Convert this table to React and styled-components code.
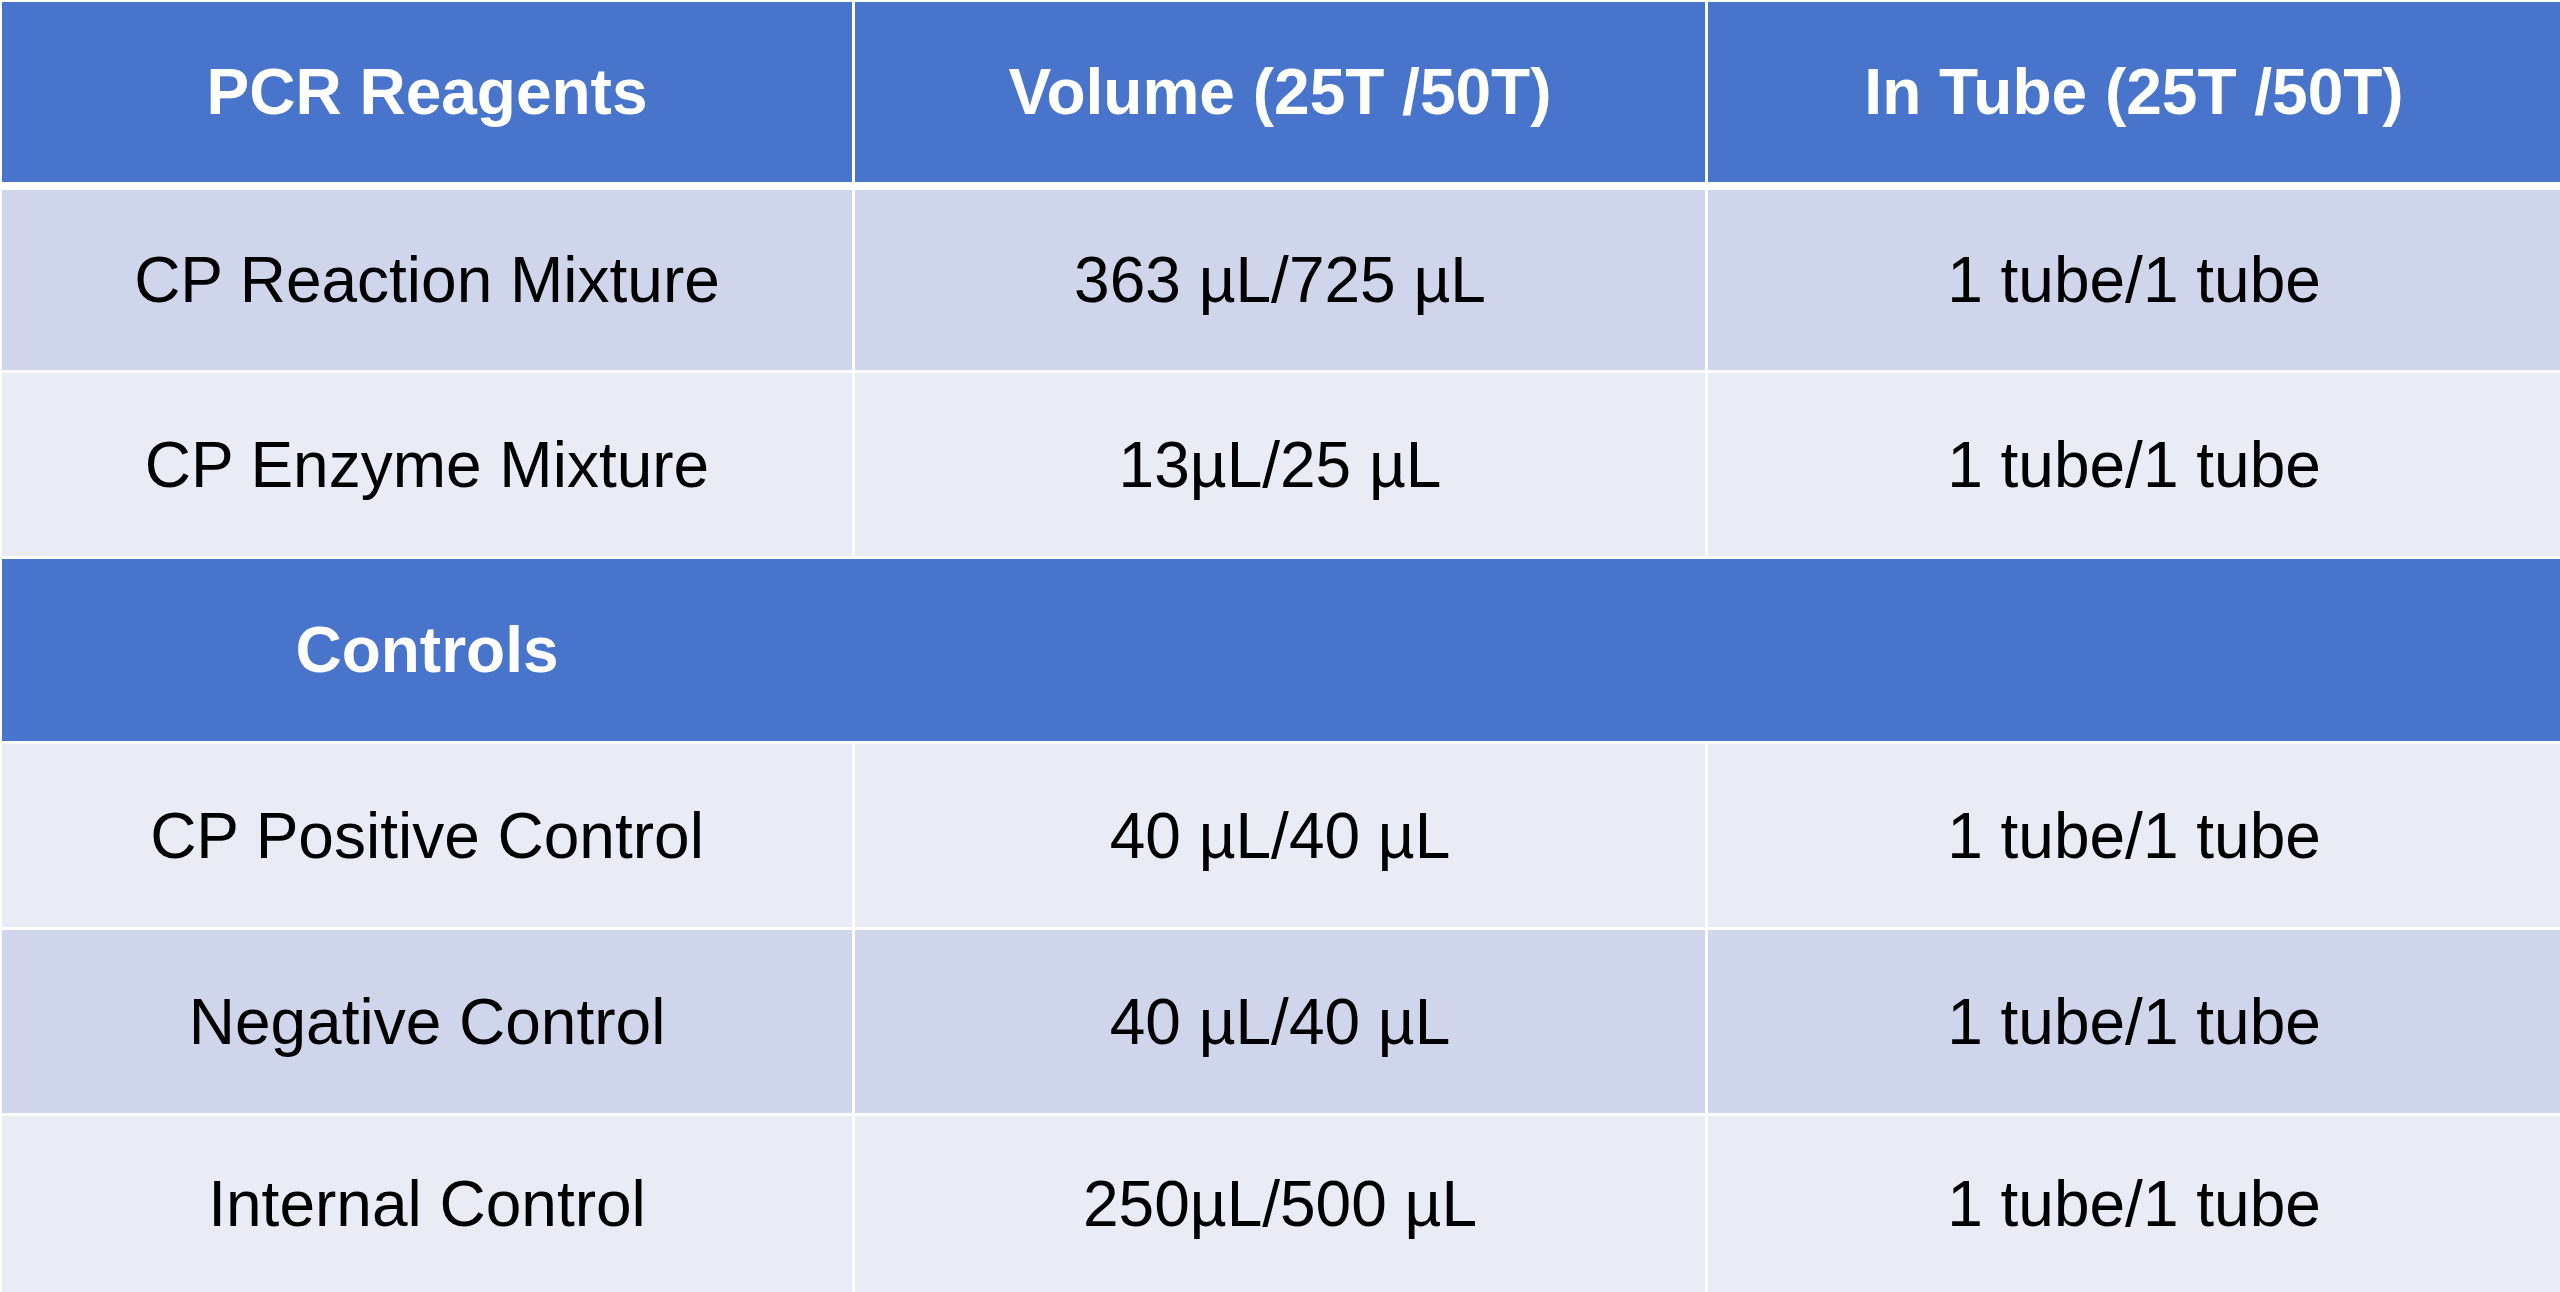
import styled, { createGlobalStyle } from "styled-components";

const GlobalStyle = createGlobalStyle`
  html, body {
    margin: 0;
    padding: 0;
    background: #ffffff;
    overflow: hidden;
  }
  body {
    font-family: "Liberation Sans", Arial, sans-serif;
  }
`;

const Page = styled.div`
  width: 2560px;
  height: 1292px;
  overflow: hidden;
  background: #ffffff;
  padding: 2px 0 0 2px;
  box-sizing: border-box;
  display: flex;
  flex-direction: column;
`;

const Row = styled.div`
  display: grid;
  grid-template-columns: 850px 850px 1fr;
  column-gap: 3px;
  height: ${(p) => p.$h}px;
  flex-shrink: 0;
  margin-bottom: ${(p) => p.$after}px;
`;

const BandRow = styled.div`
  display: grid;
  grid-template-columns: 850px 1fr;
  height: ${(p) => p.$h}px;
  flex-shrink: 0;
  margin-bottom: ${(p) => p.$after}px;
  background: #4875cb;
`;

const Cell = styled.div`
  display: flex;
  align-items: center;
  justify-content: center;
  background: ${(p) => p.$bg};
  color: ${(p) => (p.$head ? "#ffffff" : "#000000")};
  font-weight: ${(p) => (p.$head ? 700 : 400)};
  font-size: 64px;
  line-height: 1;
  white-space: nowrap;
`;

const BLUE = "#4875cb";
const DARK = "#cfd5ea";
const LIGHT = "#e9ebf5";

const reagents = [
  { name: "CP Reaction Mixture", volume: "363 µL/725 µL", tube: "1 tube/1 tube", bg: DARK, h: 180 },
  { name: "CP Enzyme Mixture", volume: "13µL/25 µL", tube: "1 tube/1 tube", bg: LIGHT, h: 183 },
];

const controls = [
  { name: "CP Positive Control", volume: "40 µL/40 µL", tube: "1 tube/1 tube", bg: LIGHT, h: 183 },
  { name: "Negative Control", volume: "40 µL/40 µL", tube: "1 tube/1 tube", bg: DARK, h: 183 },
  { name: "Internal Control", volume: "250µL/500 µL", tube: "1 tube/1 tube", bg: LIGHT, h: 176 },
];

function DataRow({ item, after }) {
  return (
    <Row $h={item.h} $after={after}>
      <Cell $bg={item.bg}>{item.name}</Cell>
      <Cell $bg={item.bg}>{item.volume}</Cell>
      <Cell $bg={item.bg}>{item.tube}</Cell>
    </Row>
  );
}

export default function App() {
  return (
    <>
      <GlobalStyle />
      <Page>
        <Row $h={180} $after={8}>
          <Cell $head $bg={BLUE}>PCR Reagents</Cell>
          <Cell $head $bg={BLUE}>Volume (25T /50T)</Cell>
          <Cell $head $bg={BLUE}>In Tube (25T /50T)</Cell>
        </Row>

        {reagents.map((item) => (
          <DataRow key={item.name} item={item} after={3} />
        ))}

        <BandRow $h={182} $after={3}>
          <Cell $head $bg={BLUE}>Controls</Cell>
          <Cell $bg={BLUE} />
        </BandRow>

        {controls.map((item, i) => (
          <DataRow key={item.name} item={item} after={i < controls.length - 1 ? 3 : 0} />
        ))}
      </Page>
    </>
  );
}
